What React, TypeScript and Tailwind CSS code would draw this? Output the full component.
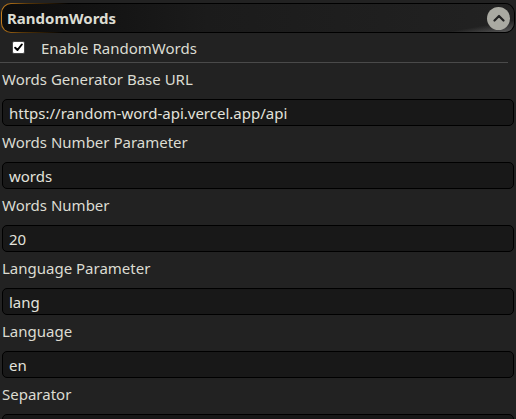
import React from "react";

const fields = [
  { label: "Words Generator Base URL", value: "https://random-word-api.vercel.app/api" },
  { label: "Words Number Parameter", value: "words" },
  { label: "Words Number", value: "20" },
  { label: "Language Parameter", value: "lang" },
  { label: "Language", value: "en" },
  { label: "Separator", value: "" },
];

export default function App() {
  return (
    <div
      className="w-[516px] h-[419px] overflow-hidden bg-[#222222] text-[#dcdcd2] text-[15px] leading-[22px]"
      style={{ fontFamily: '"Noto Sans", "Open Sans", sans-serif' }}
    >
      {/* header */}
      <div className="pt-[3px] pl-px pr-[1px]">
        <div className="rounded-[10px] p-px bg-[linear-gradient(100deg,#d08520_0%,#5a3808_5%,#000_13%,#000_86%,#000_100%)]">
          <div className="relative h-[28px] rounded-[9px] bg-[linear-gradient(90deg,#0c0c0c_0%,#1b1b1b_40%,#222_100%)] flex items-center justify-between pl-[5px] pr-[4px] overflow-hidden">
            <div className="absolute right-0 bottom-0 w-[70px] h-[14px] bg-[linear-gradient(170deg,transparent_55%,rgba(200,200,200,0.35)_100%)]" />
            <span className="relative font-bold text-[15px]">RandomWords</span>
            <div className="relative w-[23px] h-[23px] rounded-full bg-[#aaaaa2] flex items-center justify-center">
              <svg width="12" height="8" viewBox="0 0 12 8">
                <path d="M1.5 6.5 L6 2 L10.5 6.5" fill="none" stroke="#222" strokeWidth="2.2" strokeLinecap="round" strokeLinejoin="round" />
              </svg>
            </div>
          </div>
        </div>
      </div>

      {/* checkbox row */}
      <div className="h-[29px] flex items-center pl-[12px]">
        <span className="w-[13px] h-[13px] bg-white border border-[#444] rounded-[2px] flex items-center justify-center">
          <svg width="9" height="9" viewBox="0 0 9 9">
            <path d="M1.2 4.8 L3.5 7 L7.8 1.5" fill="none" stroke="#000" strokeWidth="2" strokeLinecap="round" strokeLinejoin="round" />
          </svg>
        </span>
        <span className="ml-[16px]">Enable RandomWords</span>
      </div>

      <div className="h-px bg-[#4a4a4a] mr-[8px]" />

      <div className="flex flex-col px-[2px]">
        {fields.map((f) => (
          <div key={f.label} className="flex flex-col">
            <div className="h-[36px] pt-[5px]">{f.label}</div>
            <div className="h-[27px] rounded-[5px] border border-black bg-[#181818] flex items-center pl-[6px] text-[#e2e2dc]">
              {f.value}
            </div>
          </div>
        ))}
      </div>
    </div>
  );
}
